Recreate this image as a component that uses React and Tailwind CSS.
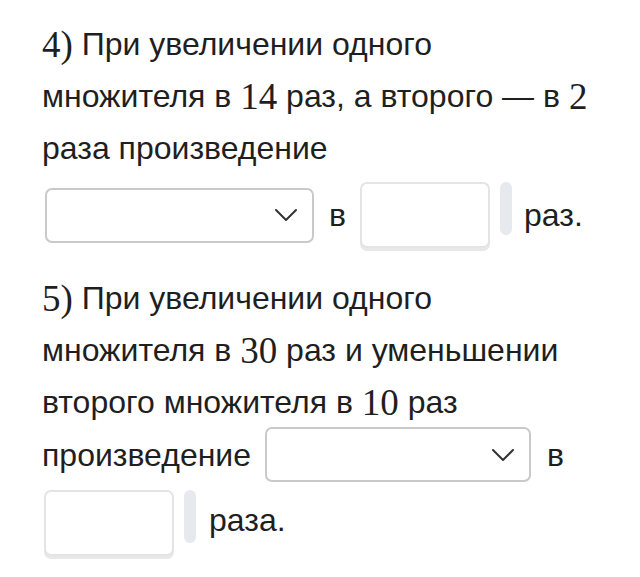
function Chevron() {
  return (
    <svg width="24" height="14" viewBox="0 0 24 14" fill="none" className="shrink-0">
      <path d="M2 2l10 10L22 2" stroke="#333" strokeWidth="2" strokeLinecap="round" strokeLinejoin="round" />
    </svg>
  );
}

function Select({ width }) {
  return (
    <div
      className="flex h-[55px] items-center justify-end rounded-[7px] border-2 border-[#c9c9c9] bg-white pr-[14px]"
      style={{ width }}
    >
      <Chevron />
    </div>
  );
}

function NumInput() {
  return (
    <div className="flex items-start gap-[10px]">
      <div className="h-[66px] w-[130px] rounded-[7px] border-2 border-[#e4e4e4] bg-white shadow-[0_3px_0_#e8e8e8]" />
      <div className="h-[53px] w-[12px] rounded-full bg-[#e6e9ee]" />
    </div>
  );
}

function N({ children }) {
  return <span className="font-['Liberation_Serif',serif] text-[37px] leading-none">{children}</span>;
}

export default function App() {
  return (
    <div className="min-h-[577px] bg-white pt-[18px] pl-[42px] font-['Liberation_Sans',Arial,sans-serif] text-[32px] text-[#1f1f1f]">
      <div className="flex h-[52px] items-center">
        <N>4)</N>&nbsp;При увеличении одного
      </div>
      <div className="flex h-[52px] items-center whitespace-pre">
        множителя в <N>14</N> раз, а второго — в <N>2</N>
      </div>
      <div className="flex h-[52px] items-center">раза произведение</div>
      <div className="flex h-[82px] items-center">
        <div className="ml-[3px]">
          <Select width={269} />
        </div>
        <span className="ml-[15px] mr-[14px]">в</span>
        <NumInput />
        <span className="ml-[12px]">раз.</span>
      </div>

      <div className="mt-[16px] flex h-[52px] items-center">
        <N>5)</N>&nbsp;При увеличении одного
      </div>
      <div className="flex h-[52px] items-center whitespace-pre">
        множителя в <N>30</N> раз и уменьшении
      </div>
      <div className="flex h-[52px] items-center whitespace-pre">
        второго множителя в <N>10</N> раз
      </div>
      <div className="flex h-[53px] items-center">
        <span>произведение</span>
        <div className="ml-[14px]">
          <Select width={266} />
        </div>
        <span className="ml-[16px]">в</span>
      </div>
      <div className="mt-[9px] flex items-center">
        <div className="ml-[2px]">
          <NumInput />
        </div>
        <span className="ml-[13px] -mt-[6px]">раза.</span>
      </div>
    </div>
  );
}
